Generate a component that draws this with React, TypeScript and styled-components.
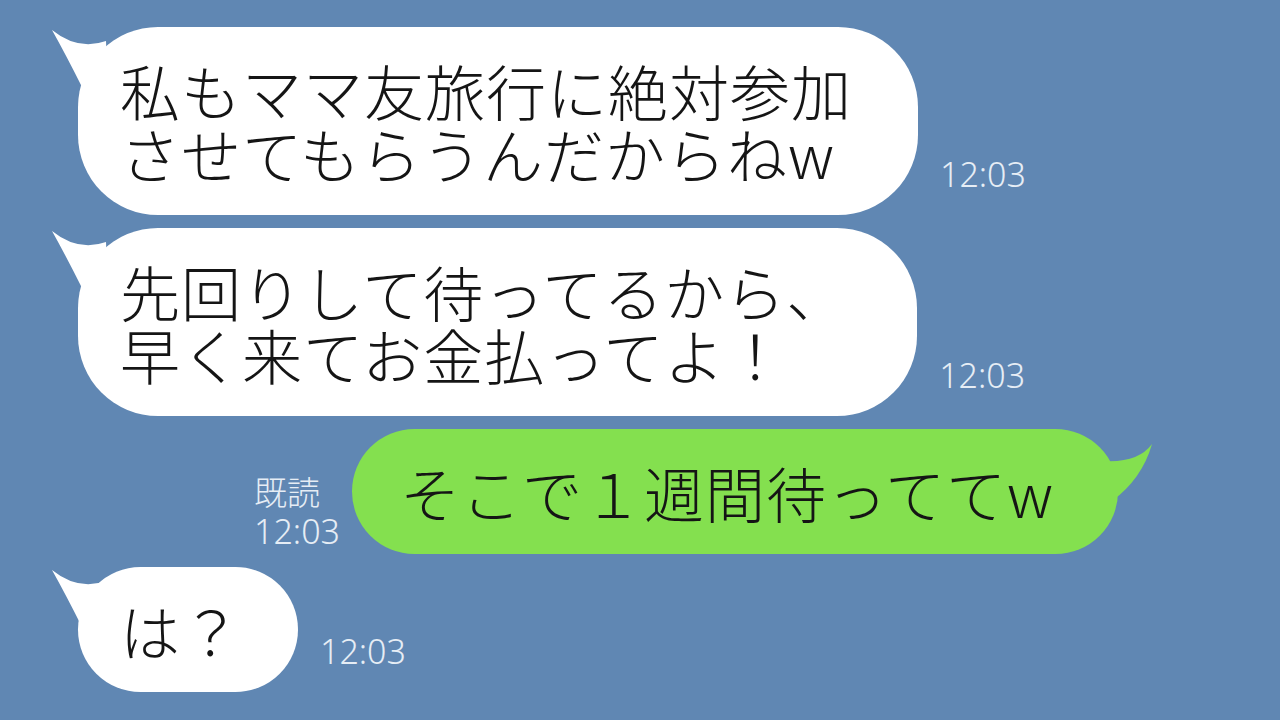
import styled, { createGlobalStyle } from 'styled-components'

const GlobalStyle = createGlobalStyle`
    html, body {
        margin: 0;
        padding: 0;
        background: #6087b3;
    }
`

const Screen = styled.div`
    width: 1280px;
    height: 720px;
    overflow: hidden;
    box-sizing: border-box;
    padding: 27px 162px 0 78px;
    display: flex;
    flex-direction: column;
    gap: 13px;
    background: #6087b3;
    font-family: 'Noto Sans CJK JP', 'Noto Sans', sans-serif;
`

const Row = styled.div<{ $mine?: boolean }>`
    display: flex;
    flex-direction: ${({ $mine }) => ($mine ? 'row-reverse' : 'row')};
    align-items: flex-end;
    gap: ${({ $mine }) => ($mine ? '12px' : '22px')};
`

const BubbleBox = styled.div<{ $mine?: boolean; $padRight: number }>`
    position: relative;
    padding: 31px ${({ $padRight }) => $padRight}px 31px ${({ $mine }) => ($mine ? '48px' : '42px')};
    border-radius: 80px;
    background: ${({ $mine }) => ($mine ? '#84e04f' : '#ffffff')};
    color: #151515;
    font-size: 60px;
    font-weight: 300;
    line-height: 63px;
    letter-spacing: 1px;
    white-space: nowrap;
`

const Tail = styled.svg<{ $mine?: boolean }>`
    position: absolute;
    top: 0;
    width: 60px;
    height: 80px;
    overflow: visible;
    ${({ $mine }) => ($mine ? 'right: -40px;' : 'left: -30px;')}
`

const Meta = styled.div<{ $lift: number }>`
    display: flex;
    flex-direction: column;
    align-items: flex-start;
    margin-bottom: ${({ $lift }) => $lift}px;
    color: #e6edf5;
    font-family: 'Noto Sans', 'Noto Sans CJK JP', sans-serif;
    font-weight: 300;
    font-size: 34px;
    line-height: 38px;
`

const Read = styled.span`
    font-family: 'Noto Sans CJK JP', sans-serif;
    font-weight: 300;
    font-size: 33px;
    line-height: 42px;
`

interface BubbleProps {
    mine?: boolean
    padRight?: number
    lines: string[]
}

const Bubble = ({ mine, padRight = 66, lines }: BubbleProps) => (
    <BubbleBox $mine={mine} $padRight={padRight}>
        <Tail $mine={mine} viewBox="0 0 60 80">
            {mine ? (
                <path d="M54,15 Q40,34 6,32 L0,50 L14,72 Q44,50 54,15 Z" fill="#84e04f" />
            ) : (
                <path d="M4,3 Q30,24 58,14 L60,60 L34,60 Q18,28 4,3 Z" fill="#ffffff" />
            )}
        </Tail>
        {lines.map((line, i) => (
            <div key={i}>{line}</div>
        ))}
    </BubbleBox>
)

const App = () => {
    return (
        <Screen>
            <GlobalStyle />
            <Row>
                <Bubble lines={['私もママ友旅行に絶対参加', 'させてもらうんだからねw']} />
                <Meta $lift={22}>12:03</Meta>
            </Row>
            <Row>
                <Bubble padRight={70} lines={['先回りして待ってるから、', '早く来てお金払ってよ！']} />
                <Meta $lift={22}>12:03</Meta>
            </Row>
            <Row $mine>
                <Bubble mine padRight={64} lines={['そこで１週間待っててw']} />
                <Meta $lift={4}>
                    <Read>既読</Read>
                    12:03
                </Meta>
            </Row>
            <Row>
                <Bubble padRight={56} lines={['は？']} />
                <Meta $lift={22}>12:03</Meta>
            </Row>
        </Screen>
    )
}

export default App
